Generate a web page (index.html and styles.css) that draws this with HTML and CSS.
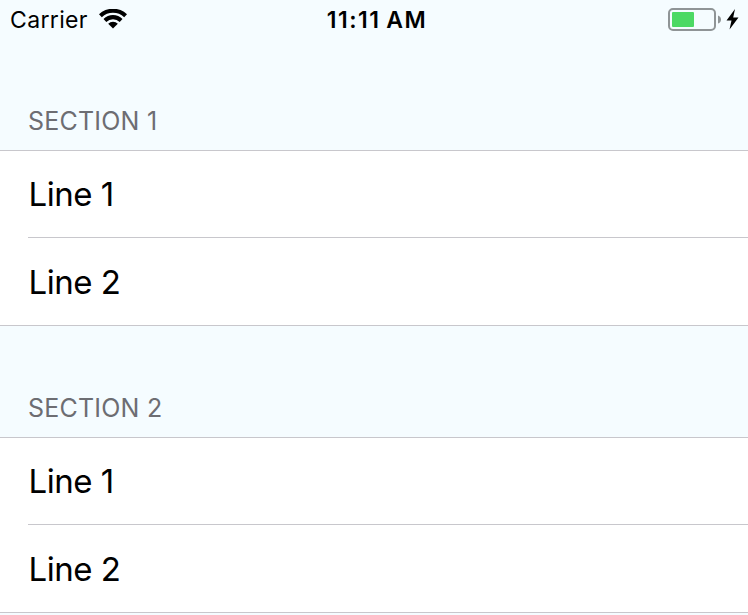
FILE: index.html
```html
<!DOCTYPE html>
<html lang="en">
<head>
<meta charset="utf-8">
<title>Sections</title>
<link rel="stylesheet" href="styles.css">
</head>
<body>
<header class="status-bar">
  <div class="carrier"><span class="carrier-name">Carrier</span>
    <svg class="wifi" width="28" height="20" viewBox="0 0 28 20"><path d="M0 5.200A20.500 20.500 0 0 1 28 5.200L25.200 8.200A16.200 16.200 0 0 0 2.800 8.200Z"/><path d="M4.500 9.900A13.600 13.600 0 0 1 23.500 9.900L20.700 12.900A9.600 9.600 0 0 0 7.300 12.900Z"/><path d="M9.200 14.700A6.900 6.900 0 0 1 18.800 14.700L14 19.600Z"/></svg>
  </div>
  <div class="clock">11:11 AM</div>
  <div class="power">
    <svg width="72" height="24" viewBox="0 0 72 24"><rect x="1" y="1" width="46" height="21" rx="4" fill="none" stroke="#8f9496" stroke-width="2"/><rect x="4" y="4" width="22" height="15" rx="1" fill="#4cd964"/><path d="M50 7.500Q53 8.500 53 11.500Q53 14.500 50 15.500Z" fill="#8f9496"/><path d="M67 1L58.500 12.500H63.500L61.500 21.500L70.500 9.500H65.200Z"/></svg>
  </div>
</header>
<main>
  <section class="group">
    <h2 class="heading">SECTION 1</h2>
    <ul class="list"><li class="row"><span>Line 1</span></li><li class="row"><span>Line 2</span></li></ul>
  </section>
  <section class="group">
    <h2 class="heading">SECTION 2</h2>
    <ul class="list"><li class="row"><span>Line 1</span></li><li class="row"><span>Line 2</span></li></ul>
  </section>
</main>
</body>
</html>
```
FILE: styles.css
```css
* { box-sizing: border-box; }
body { margin: 0; height: 615px; overflow: hidden; background: #f5fcff; color: #000; font-family: Inter, "Liberation Sans", sans-serif; }
.status-bar { display: grid; grid-template-columns: 1fr auto 1fr; align-items: center; height: 40px; padding: 0 8px 0 10px; }
.carrier { display: flex; align-items: center; gap: 11.5px; font-size: 23px; letter-spacing: .35px; }
.wifi { margin-top: -2px; }
.clock { padding-left: 4px; font-size: 23px; font-weight: 600; letter-spacing: 1.5px; word-spacing: -1.5px; }
.power { display: flex; justify-content: flex-end; }
.group { height: 287px; }
.heading { margin: 0; height: 110px; padding: 66px 28px 0; font-size: 25px; line-height: 30px; font-weight: 400; letter-spacing: .22px; color: #6d6d72; }
.list { margin: 0; padding: 0; list-style: none; height: 176px; border-top: 1px solid #c8c7cc; border-bottom: 1px solid #c8c7cc; background: #fff; }
.row { height: 86px; padding-left: 28px; font-size: 33px; letter-spacing: -.5px; }
.row span { display: flex; align-items: center; height: 100%; padding-left: .5px; }
.row + .row { height: 88px; }
.row + .row span { border-top: 1px solid #c8c7cc; }
```
